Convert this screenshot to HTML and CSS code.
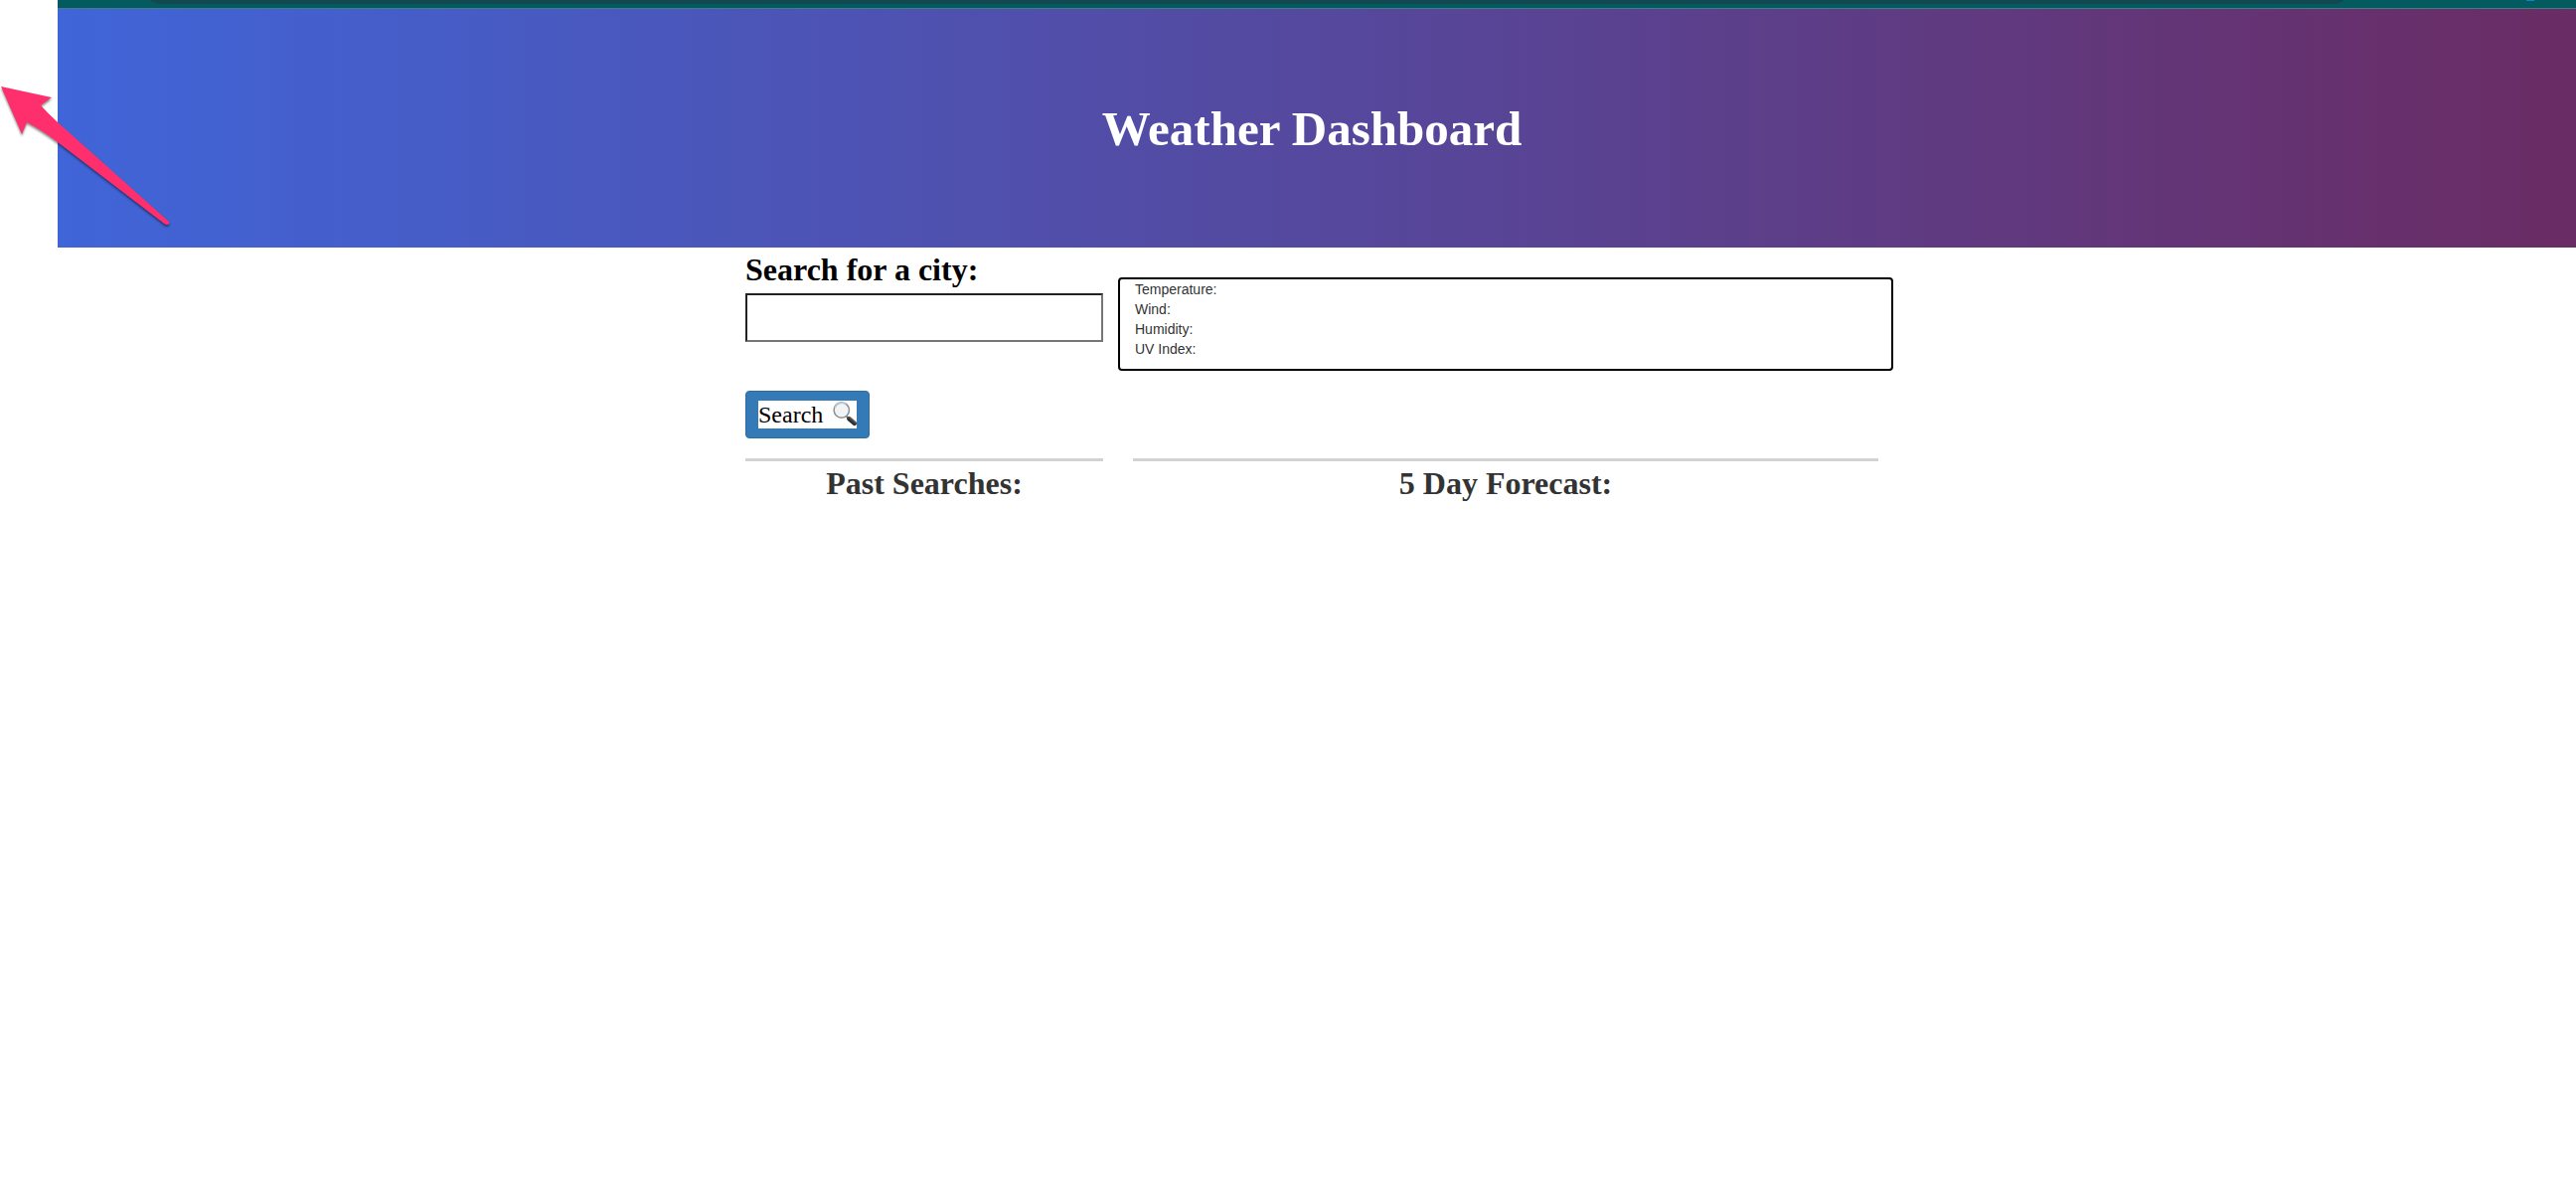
FILE: index.html
```html
<!DOCTYPE html>
<html lang="en">
<head>
  <meta charset="utf-8">
  <title>Weather Dashboard</title>
  <link rel="stylesheet" href="styles.css">
</head>
<body>
  <div class="page">
    <div class="browser-edge"><div class="address-bar"></div><span class="browser-dot"></span></div>
    <header class="hero"><h1>Weather Dashboard</h1></header>
    <main class="container">
      <form class="search">
        <label for="city">Search for a city:</label>
        <input id="city" class="city-input" type="text">
        <button class="search-button" type="button"><span class="search-text">Search <svg class="glass" viewBox="0 0 24 26" aria-hidden="true">
          <defs><linearGradient id="handle" x1="0" y1="1" x2="1" y2="0"><stop offset="0" stop-color="#111"/><stop offset=".6" stop-color="#444"/><stop offset="1" stop-color="#999"/></linearGradient></defs>
          <path d="M13.500 15.500l3 3" stroke="#777" stroke-width="2"/>
          <path d="M16.500 18.200l5.300 4.600" stroke="url(#handle)" stroke-width="4.600" stroke-linecap="round"/>
          <circle cx="8.800" cy="9.600" r="7.700" fill="#f3f3f4" stroke="#8b9096" stroke-width="1.500"/>
          <path d="M2.200 7a7.200 7.200 0 0 1 11-3.400" fill="none" stroke="#b9cad8" stroke-width="1.500"/>
        </svg></span></button>
      </form>
      <section class="current">
        <p>Temperature:</p>
        <p>Wind:</p>
        <p>Humidity:</p>
        <p>UV Index:</p>
      </section>
      <section class="panel"><h2>Past Searches:</h2></section>
      <section class="panel"><h2>5 Day Forecast:</h2></section>
    </main>
  </div>
  <svg class="arrow" viewBox="0 0 180 150" aria-hidden="true">
    <path d="M1 7L52 18L41 26Q48 34 58 43L170 143Q171 146 168 146Q166 146 164 144L58 63Q42 51 27 43L22 55Z" fill="#ff2f6d"/>
  </svg>
</body>
</html>
```

FILE: styles.css
```css
* {
  box-sizing: border-box;
}

body {
  margin: 0;
  background: #fff;
  color: #333;
  font: 14px/20px "Helvetica Neue", Helvetica, "Liberation Sans", Arial, sans-serif;
}

h1,
h2,
p {
  margin: 0;
}

.page {
  margin-left: 58px;
}

.browser-edge {
  display: flex;
  height: 9px;
  padding: 0 234px 0 94px;
  background: #035b60;
  border-bottom: 1px solid #3f7f86;
  position: relative;
}

.address-bar {
  flex: 1;
  height: 4px;
  background: #12484f;
  border-radius: 0 0 12px 12px / 0 0 4px 4px;
}

.browser-dot {
  position: absolute;
  top: 0;
  right: 42px;
  width: 8px;
  height: 1px;
  background: #0a84d0;
}

.hero {
  display: flex;
  justify-content: center;
  height: 240px;
  padding: 92px 10px 0 0;
  background: linear-gradient(90deg, #4065d8, #6a2c64);
  color: #fff;
}

.hero h1 {
  font: bold 49px/58px Baskerville, "Liberation Serif", serif;
}

.container {
  display: grid;
  grid-template-columns: 1fr 2fr;
  width: 1170px;
  max-width: 100%;
  margin: 0 auto;
  position: relative;
  right: 5px;
}

.search {
  display: flex;
  flex-direction: column;
  align-items: flex-start;
  padding: 4px 15px 20px;
}

.search label {
  padding-bottom: 6px;
  color: #000;
  font: bold 32px/36px Baskerville, "Liberation Serif", serif;
}

.city-input {
  width: 100%;
  height: 49px;
  padding: 2px 8px;
  background: #fff;
  border: 2px solid;
  border-color: #222 #767676 #767676 #222;
  font: 24px/28px Baskerville, "Liberation Serif", serif;
}

.search-button {
  height: 48px;
  margin-top: 49px;
  padding: 6px 12px;
  background: #337ab7;
  border: 1px solid #2e6da4;
  border-radius: 4px;
  color: #000;
  font: 24px/28px Baskerville, "Liberation Serif", serif;
}

.search-text {
  display: flex;
  gap: 10px;
  background: #fff;
}

.glass {
  width: 24px;
  height: 26px;
}

.current {
  align-self: start;
  margin-top: 30px;
  padding: 0 15px 10px;
  border: 2px solid #000;
  border-radius: 4px;
}

.panel {
  margin: 0 15px;
  border-top: 3px solid #d3d3d3;
  text-align: center;
}

.panel h2 {
  font: bold 32px/44px Baskerville, "Liberation Serif", serif;
}

.arrow {
  position: absolute;
  top: 80px;
  left: 0;
  width: 180px;
  height: 150px;
  filter: drop-shadow(0 2px 1px rgb(0 0 0 / 45%));
}
```
